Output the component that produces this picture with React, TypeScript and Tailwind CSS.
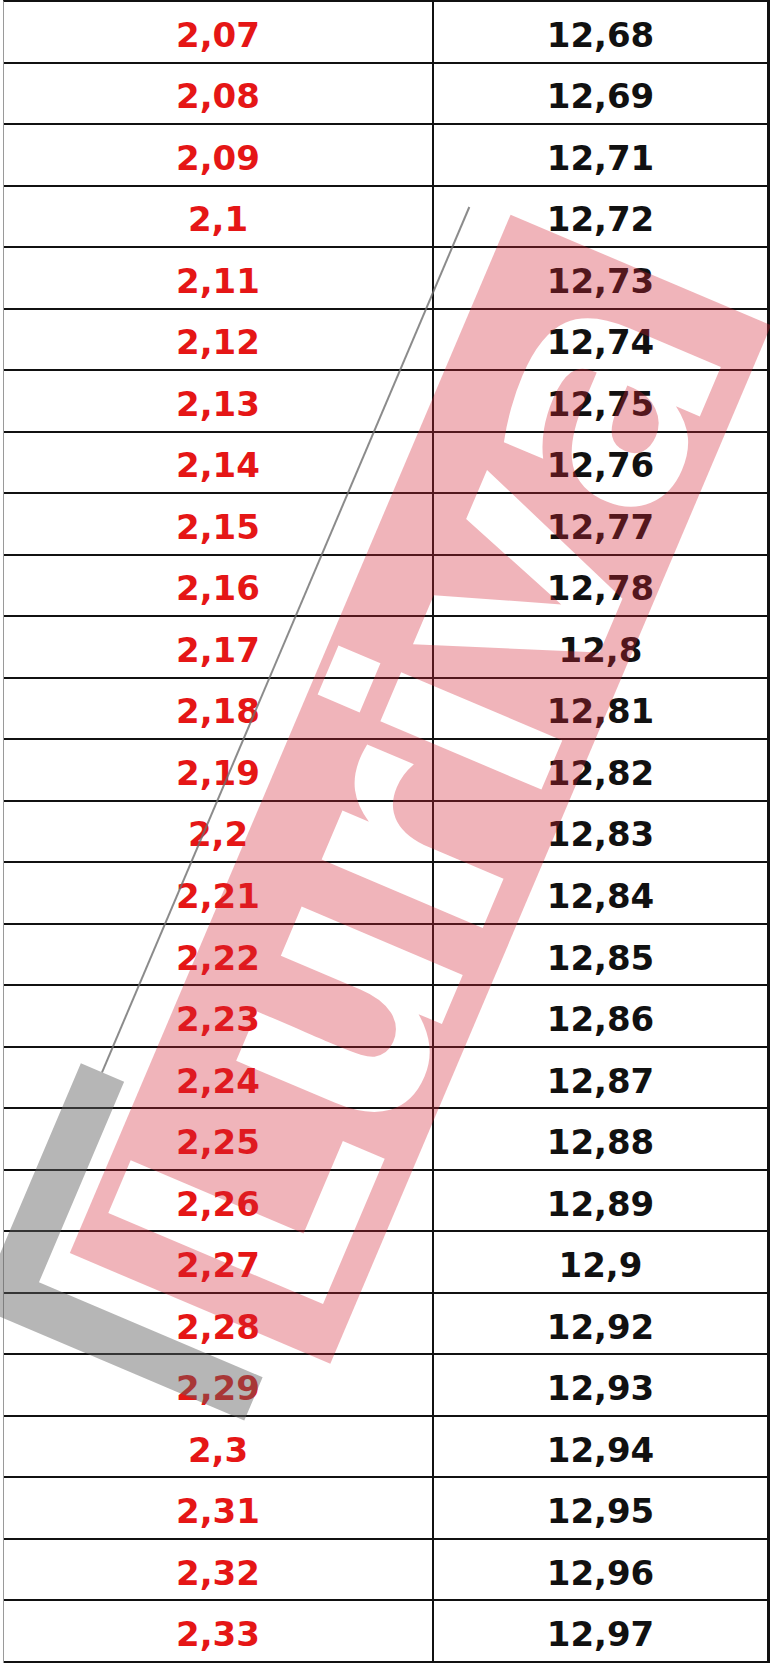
const rows: [string, string][] = [
  ["2,07", "12,68"],
  ["2,08", "12,69"],
  ["2,09", "12,71"],
  ["2,1", "12,72"],
  ["2,11", "12,73"],
  ["2,12", "12,74"],
  ["2,13", "12,75"],
  ["2,14", "12,76"],
  ["2,15", "12,77"],
  ["2,16", "12,78"],
  ["2,17", "12,8"],
  ["2,18", "12,81"],
  ["2,19", "12,82"],
  ["2,2", "12,83"],
  ["2,21", "12,84"],
  ["2,22", "12,85"],
  ["2,23", "12,86"],
  ["2,24", "12,87"],
  ["2,25", "12,88"],
  ["2,26", "12,89"],
  ["2,27", "12,9"],
  ["2,28", "12,92"],
  ["2,29", "12,93"],
  ["2,3", "12,94"],
  ["2,31", "12,95"],
  ["2,32", "12,96"],
  ["2,33", "12,97"],
];

// watermark stamp drawn over the sheet (coords are local to the rotated group)
function Watermark() {
  return (
    <svg
      className="pointer-events-none absolute inset-0"
      width={770}
      height={1663}
      viewBox="0 0 770 1663"
    >
      <defs>
        <mask id="stamp-cut" maskUnits="userSpaceOnUse" x={-700} y={-300} width={1400} height={600}>
          <rect x={-700} y={-300} width={1400} height={600} fill="white" />
          <text
            x={-540}
            y={112}
            fill="black"
            fontFamily="'DejaVu Sans', sans-serif"
            fontWeight="bold"
            fontSize={320}
            textLength={1070}
            lengthAdjust="spacingAndGlyphs"
          >
            Luriva
          </text>
        </mask>
      </defs>
      <g transform="translate(420 789) rotate(-67)">
        <rect
          x={-564}
          y={-141}
          width={1128}
          height={283}
          fill="rgba(212,36,52,0.34)"
          mask="url(#stamp-cut)"
        />
        <path
          d="M -650 -205 L -385 -205 L -385 -158 L -603 -158 L -603 85 L -650 85 Z"
          fill="rgba(95,95,95,0.46)"
        />
        <line x1={-385} y1={-182} x2={555} y2={-182} stroke="rgba(110,110,110,0.8)" strokeWidth={2} />
      </g>
    </svg>
  );
}

export default function App() {
  return (
    <div className="relative h-[1663px] w-[770px] overflow-hidden bg-white">
      <div className="ml-[3px] grid h-full grid-rows-[repeat(27,minmax(0,1fr))] border-l border-t-2 border-r-[3px] border-l-[#9a9a9a] border-t-[#111] border-r-[#111]">
        {rows.map(([a, b], i) => (
          <div key={i} className="grid grid-cols-[430px_1fr] border-b-2 border-[#111]">
            <div
              className="flex items-center justify-center border-r-2 border-[#111] pt-[7px] text-[34px] font-bold text-[#e51616]"
              style={{ fontFamily: "'DejaVu Sans', sans-serif" }}
            >
              {a}
            </div>
            <div
              className="flex items-center justify-center pt-[7px] text-[34px] font-bold text-[#111]"
              style={{ fontFamily: "'DejaVu Sans', sans-serif" }}
            >
              {b}
            </div>
          </div>
        ))}
      </div>
      <Watermark />
    </div>
  );
}
